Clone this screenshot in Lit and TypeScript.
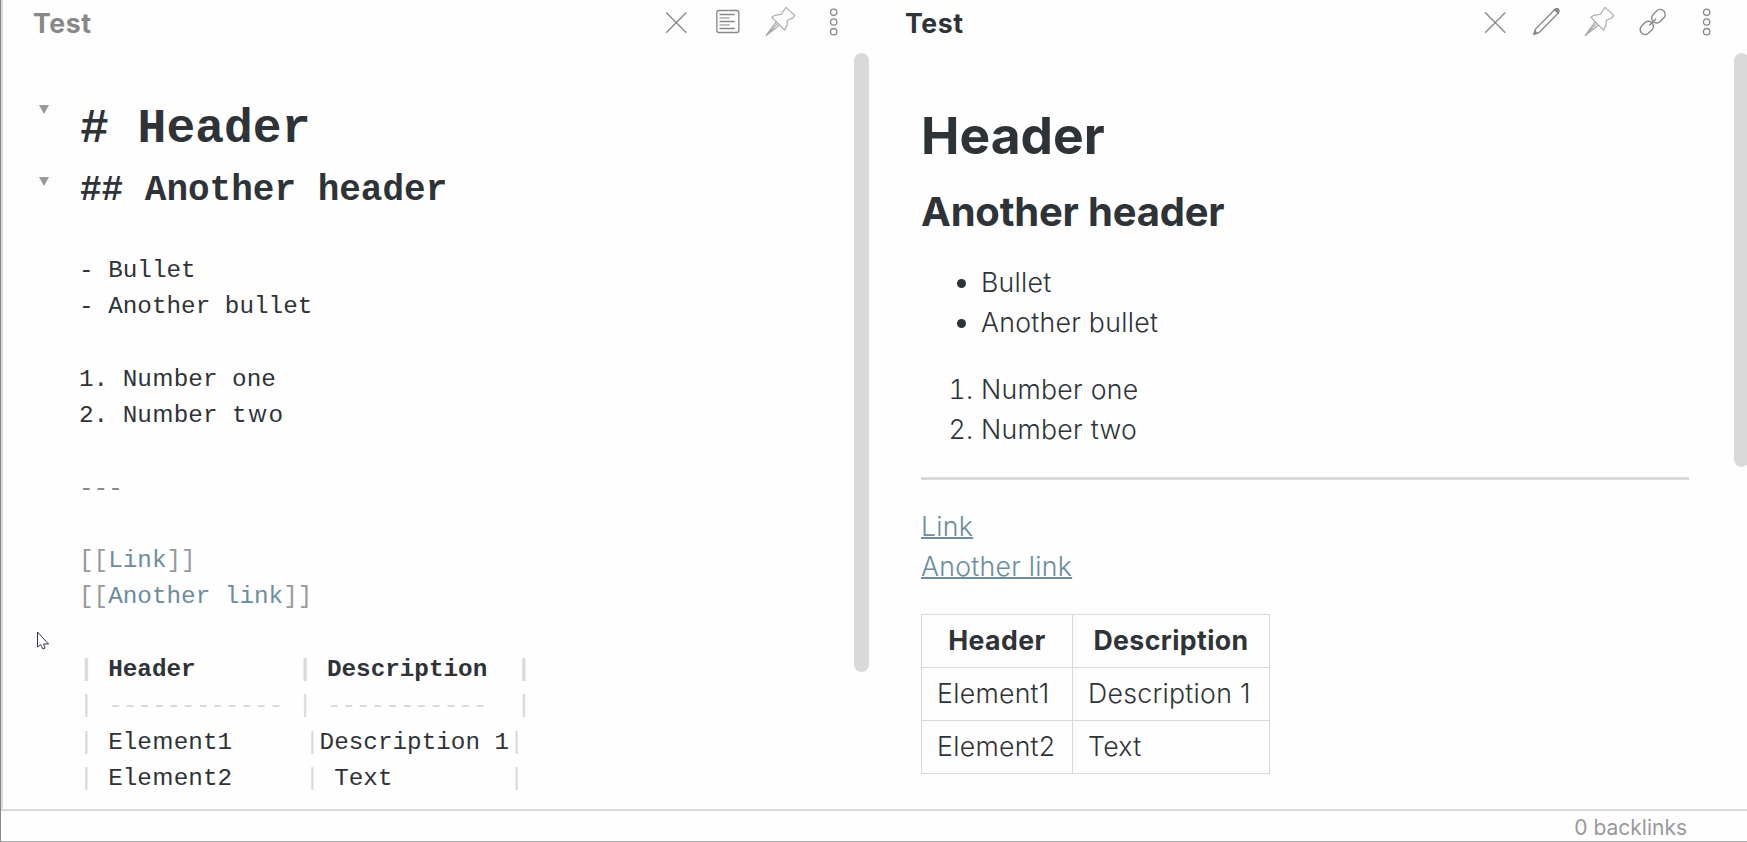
import { LitElement, html, css, svg } from "lit";
import { customElement } from "lit/decorators.js";

const close = svg`<path d="M15.5 16.5L76 77M76 16.5L15.5 77"/>`;
const lines = svg`<rect x="11.5" y="10.5" width="66" height="66" rx="6"/>
  <path d="M19.500 22.500H65M19.500 43.500H65M19.500 64.500H65"/><path class="thin" d="M19.500 33H50M19.500 54H50"/>`;
const pin = svg`<g class="faint"><path d="M63 1L89 25L84 32L67 40L66 55L59 69L42 53L21 31L29 25L49 22Z"/><path d="M34 44L3 86L44 54M3 86L38 49"/></g>`;
const pencil = svg`<path d="M6 82L10 67L67 9Q73 3 79 6Q83 12 78 19L21 77Z"/><path class="solid" d="M67 8Q73 3 79 6Q83 12 79 18ZM8 72L15 79L6 82Z"/>`;
const link = svg`<g transform="rotate(-45 50 45)"><rect x="3" y="30" width="44" height="30" rx="15"/><rect x="52" y="30" width="45" height="30" rx="15"/><path d="M35 45H64"/></g>`;
const more = svg`<circle cx="50" cy="16" r="9.500"/><circle cx="50" cy="45" r="9.500"/><circle cx="50" cy="74" r="9.500"/>`;

const icon = (shape: unknown, cls = "") =>
  html`<svg class="icon ${cls}" viewBox="0 0 90 90">${shape}</svg>`;

@customElement("app-root")
export class AppRoot extends LitElement {
  static styles = css`
    :host { display: block; height: 842px; width: 1747px; overflow: hidden; }
    * { box-sizing: border-box; }
    .window { height: 842px; display: flex; flex-direction: column; background: #fefefe; color: #2e3338;
      border-left: 1px solid #888; border-bottom: 1px solid #aaa; font-family: Inter, sans-serif; font-size: 26.67px; }
    .panes { height: 811px; display: flex; border-left: 2px solid #d9d9d9; border-bottom: 2px solid #d9d9d9; }
    .left { width: 867px; }
    .right { width: 877px; }
    .bar { display: flex; height: 53px; }
    .title { flex: 1; font-weight: 700; font-size: 26.670px; letter-spacing: 0.600px; line-height: 47px; padding-left: 30px; }
    .right .title { padding-left: 35px; }
    .left .title { color: #888; }
    .tools { display: flex; gap: 22px; padding: 7px 22.700px 0 0; }
    .right .tools { padding-right: 27px; }
    .right .tools .more { margin-left: 2px; }
    .icon { width: 30px; height: 30px; fill: none; stroke: #888; stroke-width: 4; overflow: visible; }
    .faint { stroke: #aaa; stroke-width: 3.500; }
    .thin { stroke: #aaa; }
    .solid { fill: #888; }
    .body { display: flex; height: 756px; overflow: hidden; }
    .content { flex: 1; }
    .track { width: 16px; }
    .right .track { width: 13px; overflow: hidden; }
    .thumb { width: 15px; height: 619px; border-radius: 7.500px; background: #d9d9d9; }
    .right .thumb { height: 414px; }
    .source { font-family: "Liberation Mono", monospace; font-size: 24.300px; padding-top: 38px; }
    .line { height: 36.290px; line-height: 36.290px; padding-left: 76px; white-space: pre; }
    .h1, .h2 { font-weight: 700; padding-left: 33px; display: flex; }
    .h1 { font-size: 48px; height: 72px; line-height: 77px; }
    .h2 { font-size: 36px; height: 53.600px; line-height: 56px; }
    .h1 span, .h2 span { padding-left: 1px; }
    .h1 .fold, .h2 .fold { padding: 0; }
    .fold { width: 43px; height: 10px; flex: none; }
    .fold svg { display: block; width: 10px; height: 9px; margin: 14px 0 0 3px; fill: #999; }
    .wide { display: inline-block; width: 0.900em; text-align: center; font-family: "Liberation Sans", sans-serif; line-height: 30px; }
    .m { color: #999; } .d { color: #888; } .p { color: #d9d9d9; } .a { color: #6c8ca0; }
    .b { font-weight: 700; }
    .preview { padding: 46px 45px 0 51px; }
    h1, h2, ul, ol, p, hr { margin: 0; }
    h1 { font-size: 51.500px; line-height: 72px; }
    h2 { font-size: 40px; line-height: 60px; margin-top: 11px; letter-spacing: -0.200px; }
    ul, ol, p, td { font-weight: 350; letter-spacing: 0.280px; }
    ul, ol { padding-left: 60px; line-height: 40px; }
    ul { margin-top: 20px; }
    ol { margin-top: 27px; }
    hr { border: 0; height: 3px; background: #d9d9d9; margin-top: 28px; }
    p { line-height: 40px; margin-top: 26px; color: #6c8ca0; text-decoration: underline; text-decoration-thickness: 2px; }
    table { border-collapse: collapse; margin-top: 28px; table-layout: fixed; width: 349px; }
    .c1 { width: 151px; }
    th, td { border: 1px solid #d9d9d9; height: 53px; padding: 0 0 2px 15px; line-height: 40px; text-align: left; }
    th { padding: 0 0 2px; text-align: center; letter-spacing: 0.400px; }
    .status { height: 30px; text-align: right; padding-right: 60px; color: #999; font-size: 21px; line-height: 34px; }
    .cursor { position: absolute; left: 36px; top: 629px; width: 14px; height: 21px; }
  `;

  fold() {
    return html`<span class="fold"><svg viewBox="0 0 10 9"><path d="M0 0H10L5 9Z"/></svg></span>`;
  }

  render() {
    const L = (c: unknown) => html`<div class="line">${c}</div>`;
    const P = (s: string) => html`<span class="p">${s}</span>`;
    const W = (s: string) => html`<span class="wide">${s}</span>`;
    return html`<div class="window">
      <div class="panes">
        <section class="left">
          <div class="bar"><div class="title">Test</div>
            <div class="tools">${icon(close)}${icon(lines)}${icon(pin)}${icon(more)}</div></div>
          <div class="body">
            <div class="content source">
              <div class="line h1">${this.fold()}<span># Header</span></div>
              <div class="line h2">${this.fold()}<span>## Another header</span></div>
              ${L("")}${L("- Bullet")}${L("- Another bullet")}${L("")}
              ${L(html`1. Nu${W("m")}ber one`)}${L(html`2. Nu${W("m")}ber t${W("w")}o`)}${L("")}
              ${L(html`<span class="d">---</span>`)}${L("")}
              ${L(html`<span class="m">[[</span><span class="a">Link</span><span class="m">]]</span>`)}
              ${L(html`<span class="m">[[</span><span class="a">Another link</span><span class="m">]]</span>`)}
              ${L("")}
              ${L(html`<span class="b">${P("| ")}Header       ${P("| ")}Description  ${P("|")}</span>`)}
              ${L(P("| ------------ | -----------  |"))}
              ${L(html`${P("| ")}Ele${W("m")}ent1     ${P("|")}Description 1${P("|")}`)}
              ${L(html`${P("| ")}Ele${W("m")}ent2     ${P("|")} Text        ${P("|")}`)}
            </div>
            <div class="track"><div class="thumb"></div></div>
          </div>
        </section>
        <section class="right">
          <div class="bar"><div class="title">Test</div>
            <div class="tools">${icon(close)}${icon(pencil)}${icon(pin)}${icon(link)}${icon(more, "more")}</div></div>
          <div class="body">
            <div class="content preview">
              <h1>Header</h1><h2>Another header</h2>
              <ul><li>Bullet</li><li>Another bullet</li></ul>
              <ol><li>Number one</li><li>Number two</li></ol>
              <hr />
              <p>Link<br />Another link</p>
              <table><tr><th class="c1">Header</th><th>Description</th></tr>
                <tr><td>Element1</td><td>Description 1</td></tr>
                <tr><td>Element2</td><td>Text</td></tr></table>
            </div>
            <div class="track"><div class="thumb"></div></div>
          </div>
        </section>
      </div>
      <footer class="status">0 backlinks</footer>
      <svg class="cursor" viewBox="0 0 14 21"><path d="M1.500 3V18L4.500 15.500L7 20L9 19L7.500 15H12.500Z" fill="#fff" stroke="#334"/></svg>
    </div>`;
  }
}
